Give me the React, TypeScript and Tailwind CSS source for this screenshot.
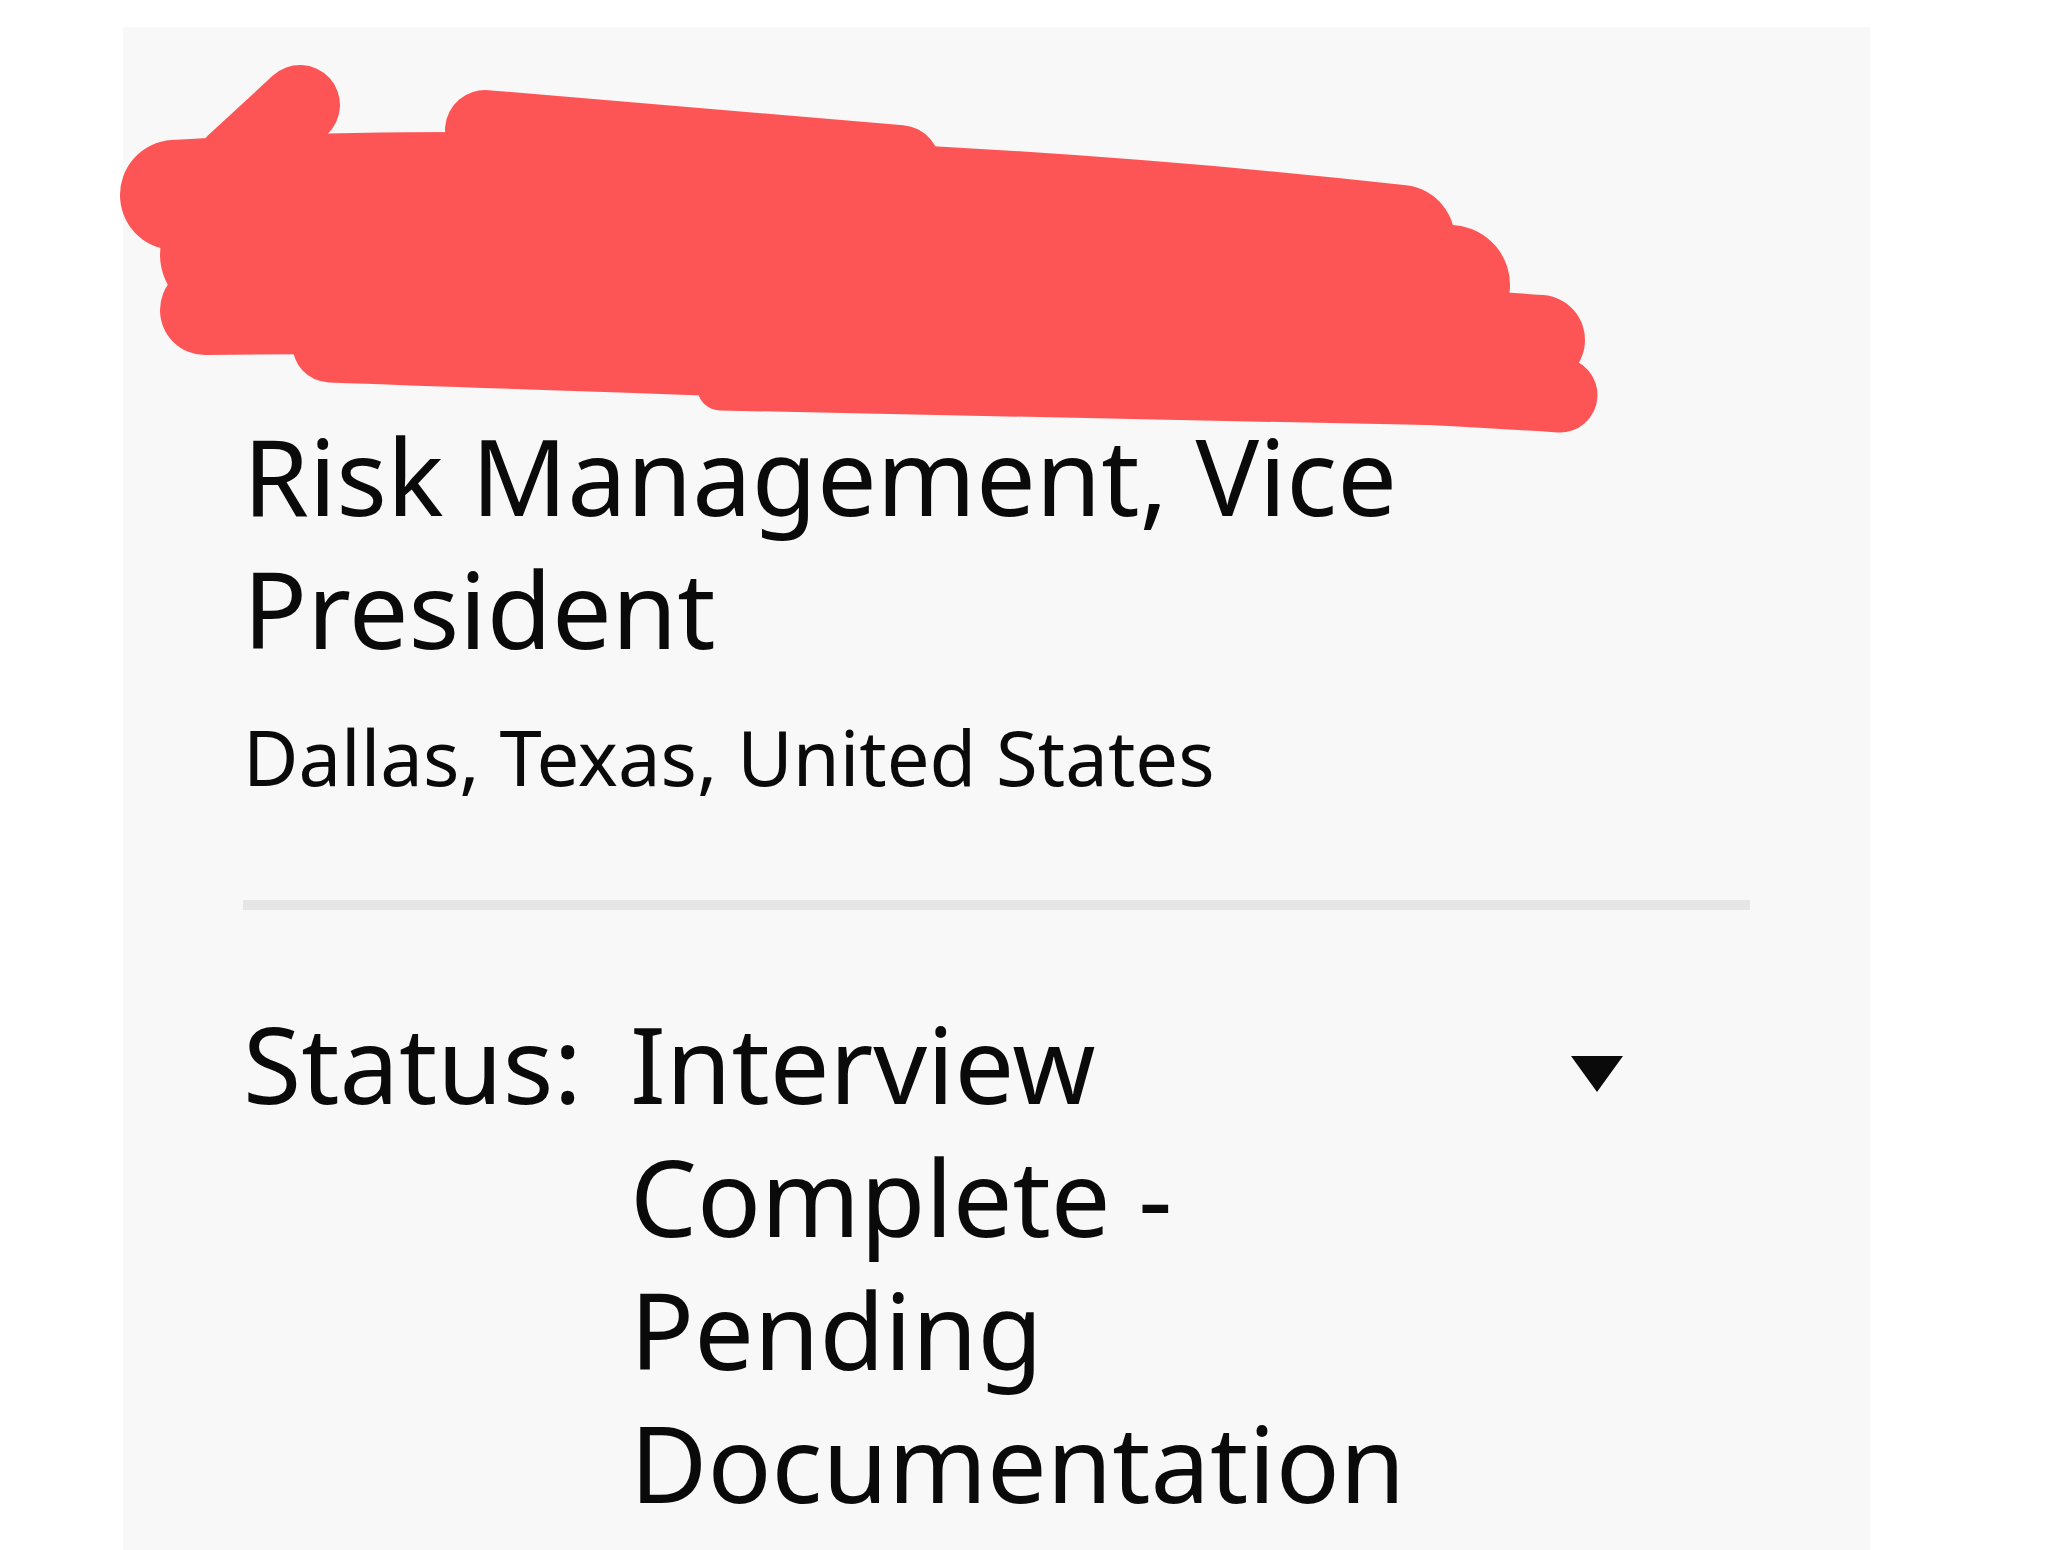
import React from "react";

const Scribble = () => (
  <svg
    className="absolute left-0 top-0 pointer-events-none"
    width="2048"
    height="480"
    viewBox="0 0 2048 480"
  >
    <g stroke="#fd5555" strokeLinecap="round" strokeLinejoin="round" fill="none">
      <path d="M300 105 L235 165" strokeWidth="80" />
      <path d="M485 130 L900 165" strokeWidth="80" />
      <path d="M175 195 C500 175 1000 195 1400 240" strokeWidth="110" />
      <path d="M220 255 C600 245 1100 255 1450 285" strokeWidth="120" />
      <path d="M205 310 C700 305 1200 315 1540 340" strokeWidth="90" />
      <path d="M330 345 C800 362 1200 372 1560 395" strokeWidth="75" />
      <path d="M720 388 L1545 405" strokeWidth="45" />
      <path d="M1200 210 L1375 215" strokeWidth="60" />
    </g>
  </svg>
);

const Caret = () => (
  <svg width="52" height="36" viewBox="0 0 52 36" className="mt-[59px] ml-[61px] shrink-0">
    <polygon points="0,0 52,0 26,36" fill="#0a0a0a" />
  </svg>
);

export default function App() {
  return (
    <div className="relative min-h-screen bg-white overflow-hidden">
      <div className="ml-[123px] mt-[27px] w-[1747px] bg-[#f8f8f8] px-[120px] pt-[116px] pb-[40px] font-['Noto_Sans',sans-serif] text-[#0a0a0a]">
        <h1 className="text-[106px] leading-[133px] font-normal">
          <span className="block h-[266px]" />
          Risk Management, Vice President
        </h1>
        <p className="mt-[32px] text-[76px] leading-[99px]">Dallas, Texas, United States</p>
        <div className="mt-[94px] h-[10px] bg-[#e6e6e6]" />
        <div className="mt-[87px] flex text-[106px] leading-[133px]">
          <span className="w-[387px] shrink-0">Status:</span>
          <span className="w-[880px] shrink-0">Interview Complete - Pending Documentation</span>
          <Caret />
        </div>
      </div>
      <Scribble />
    </div>
  );
}
